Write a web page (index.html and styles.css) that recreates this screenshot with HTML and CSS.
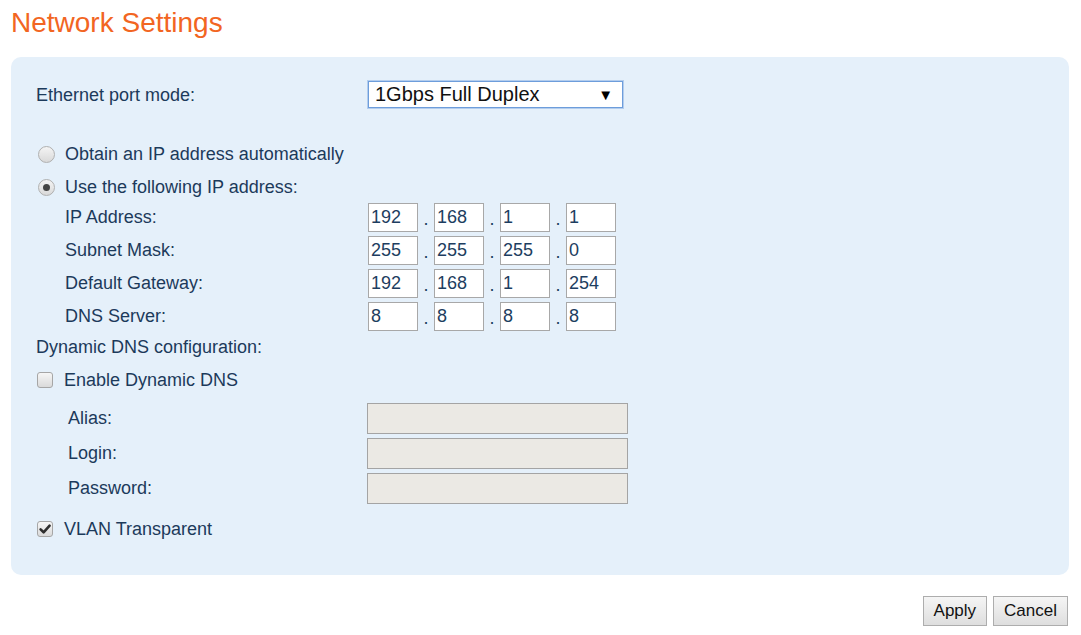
FILE: index.html
```html
<!DOCTYPE html>
<html lang="en">
<head>
<meta charset="utf-8">
<title>Network Settings</title>
<link rel="stylesheet" href="styles.css">
</head>
<body>
<h1 class="title">Network Settings</h1>
<section class="panel">
  <div class="mode-row">
    <span class="label">Ethernet port mode:</span>
    <div class="select"><span>1Gbps Full Duplex</span><span class="caret">▼</span></div>
  </div>

  <div class="choice-row radio-first"><span class="radio"></span><span class="label">Obtain an IP address automatically</span></div>
  <div class="choice-row"><span class="radio checked"></span><span class="label">Use the following IP address:</span></div>

  <div class="ip-grid">
    <span class="sublabel">IP Address:</span>
    <div class="ip"><span class="octet">192</span><span class="dot">.</span><span class="octet">168</span><span class="dot">.</span><span class="octet">1</span><span class="dot">.</span><span class="octet">1</span></div>
    <span class="sublabel">Subnet Mask:</span>
    <div class="ip"><span class="octet">255</span><span class="dot">.</span><span class="octet">255</span><span class="dot">.</span><span class="octet">255</span><span class="dot">.</span><span class="octet">0</span></div>
    <span class="sublabel">Default Gateway:</span>
    <div class="ip"><span class="octet">192</span><span class="dot">.</span><span class="octet">168</span><span class="dot">.</span><span class="octet">1</span><span class="dot">.</span><span class="octet">254</span></div>
    <span class="sublabel">DNS Server:</span>
    <div class="ip"><span class="octet">8</span><span class="dot">.</span><span class="octet">8</span><span class="dot">.</span><span class="octet">8</span><span class="dot">.</span><span class="octet">8</span></div>
  </div>

  <div class="section-label">Dynamic DNS configuration:</div>
  <div class="choice-row check-row"><span class="checkbox"></span><span class="label">Enable Dynamic DNS</span></div>

  <div class="ddns-grid">
    <span class="ddns-label">Alias:</span><span class="disabled-input"></span>
    <span class="ddns-label">Login:</span><span class="disabled-input"></span>
    <span class="ddns-label">Password:</span><span class="disabled-input"></span>
  </div>

  <div class="choice-row check-row vlan-row">
    <span class="checkbox"><svg class="tick" viewBox="0 0 16 16" width="16" height="16"><path d="M3.6 8.4 L6.6 11.3 L12.6 4.6" fill="none" stroke="#2e2e2e" stroke-width="2.6" stroke-linecap="round" stroke-linejoin="round"/></svg></span>
    <span class="label">VLAN Transparent</span>
  </div>
</section>
<div class="actions">
  <button class="btn" type="button">Apply</button>
  <button class="btn" type="button">Cancel</button>
</div>
</body>
</html>
```

FILE: styles.css
```css
html, body {
  margin: 0;
  padding: 0;
  background: #ffffff;
}

body {
  font-family: "Liberation Sans", Arial, sans-serif;
  font-size: 18px;
  color: #1c3a5b;
}

.title {
  margin: 0 0 18px 11px;
  padding-top: 7px;
  font-size: 28px;
  line-height: 32px;
  font-weight: normal;
  color: #f26522;
}

.panel {
  margin: 0 12px 0 11px;
  padding: 24px 25px 30px 25px;
  background: #e5f0fa;
  border-radius: 10px;
}

.mode-row {
  display: grid;
  grid-template-columns: 332px auto;
  align-items: center;
  height: 27px;
}

.label {
  line-height: 20px;
}

.select {
  box-sizing: border-box;
  width: 255px;
  height: 27px;
  display: flex;
  align-items: center;
  justify-content: space-between;
  padding: 0 9px 0 6px;
  background: #ffffff;
  border: 1px solid #6d9ddb;
  box-shadow: 0 0 0 1px #b3cdee;
  font-size: 20px;
  color: #111111;
}

.caret {
  font-size: 15px;
  color: #000;
}

.choice-row {
  display: flex;
  align-items: center;
  height: 33px;
}

.radio-first {
  margin-top: 29px;
}

.radio {
  box-sizing: border-box;
  width: 17px;
  height: 17px;
  margin: 2px 10px 0 2px;
  border-radius: 50%;
  border: 1px solid #b0b0b0;
  background: linear-gradient(#f4f4f4, #d9d9d9);
  display: flex;
  align-items: center;
  justify-content: center;
}

.radio.checked::after {
  content: "";
  width: 7px;
  height: 7px;
  border-radius: 50%;
  background: #444444;
}

.ip-grid {
  display: grid;
  grid-template-columns: 332px auto;
  grid-auto-rows: 29px;
  row-gap: 4px;
  align-items: center;
}

.sublabel {
  padding-left: 29px;
}

.ip {
  display: flex;
  height: 29px;
}

.octet {
  box-sizing: border-box;
  width: 50px;
  height: 29px;
  padding-left: 2px;
  background: #ffffff;
  border: 1px solid #a8a8a8;
  line-height: 27px;
  font-size: 18px;
  color: #1d3d60;
}

.dot {
  width: 16px;
  text-align: center;
  line-height: 33px;
  color: #1d3d60;
}

.section-label {
  height: 33px;
  line-height: 33px;
}

.check-row {
  height: 32px;
}

.checkbox {
  box-sizing: border-box;
  width: 16px;
  height: 16px;
  margin: 0 11px 0 1px;
  border: 1px solid #a6a6a6;
  border-radius: 3px;
  background: linear-gradient(#f6f6f6, #dadada);
  display: flex;
  align-items: center;
  justify-content: center;
}

.tick {
  display: block;
  margin: -1px;
}

.ddns-grid {
  margin-top: 7px;
  display: grid;
  grid-template-columns: 331px auto;
  grid-auto-rows: 31px;
  row-gap: 4px;
  align-items: center;
}

.ddns-label {
  padding-left: 32px;
}

.disabled-input {
  box-sizing: border-box;
  width: 261px;
  height: 31px;
  background: #ebe9e4;
  border: 1px solid #a4a4a4;
}

.vlan-row {
  margin-top: 9px;
}

.actions {
  display: flex;
  justify-content: flex-end;
  gap: 6px;
  margin: 21px 13px 0 0;
}

.btn {
  box-sizing: border-box;
  height: 30px;
  padding: 0 10px;
  font-family: "Liberation Sans", Arial, sans-serif;
  font-size: 17px;
  color: #111111;
  background: linear-gradient(#f5f5f5, #dedede);
  border: 1px solid #adadad;
  border-radius: 0;
}
```
